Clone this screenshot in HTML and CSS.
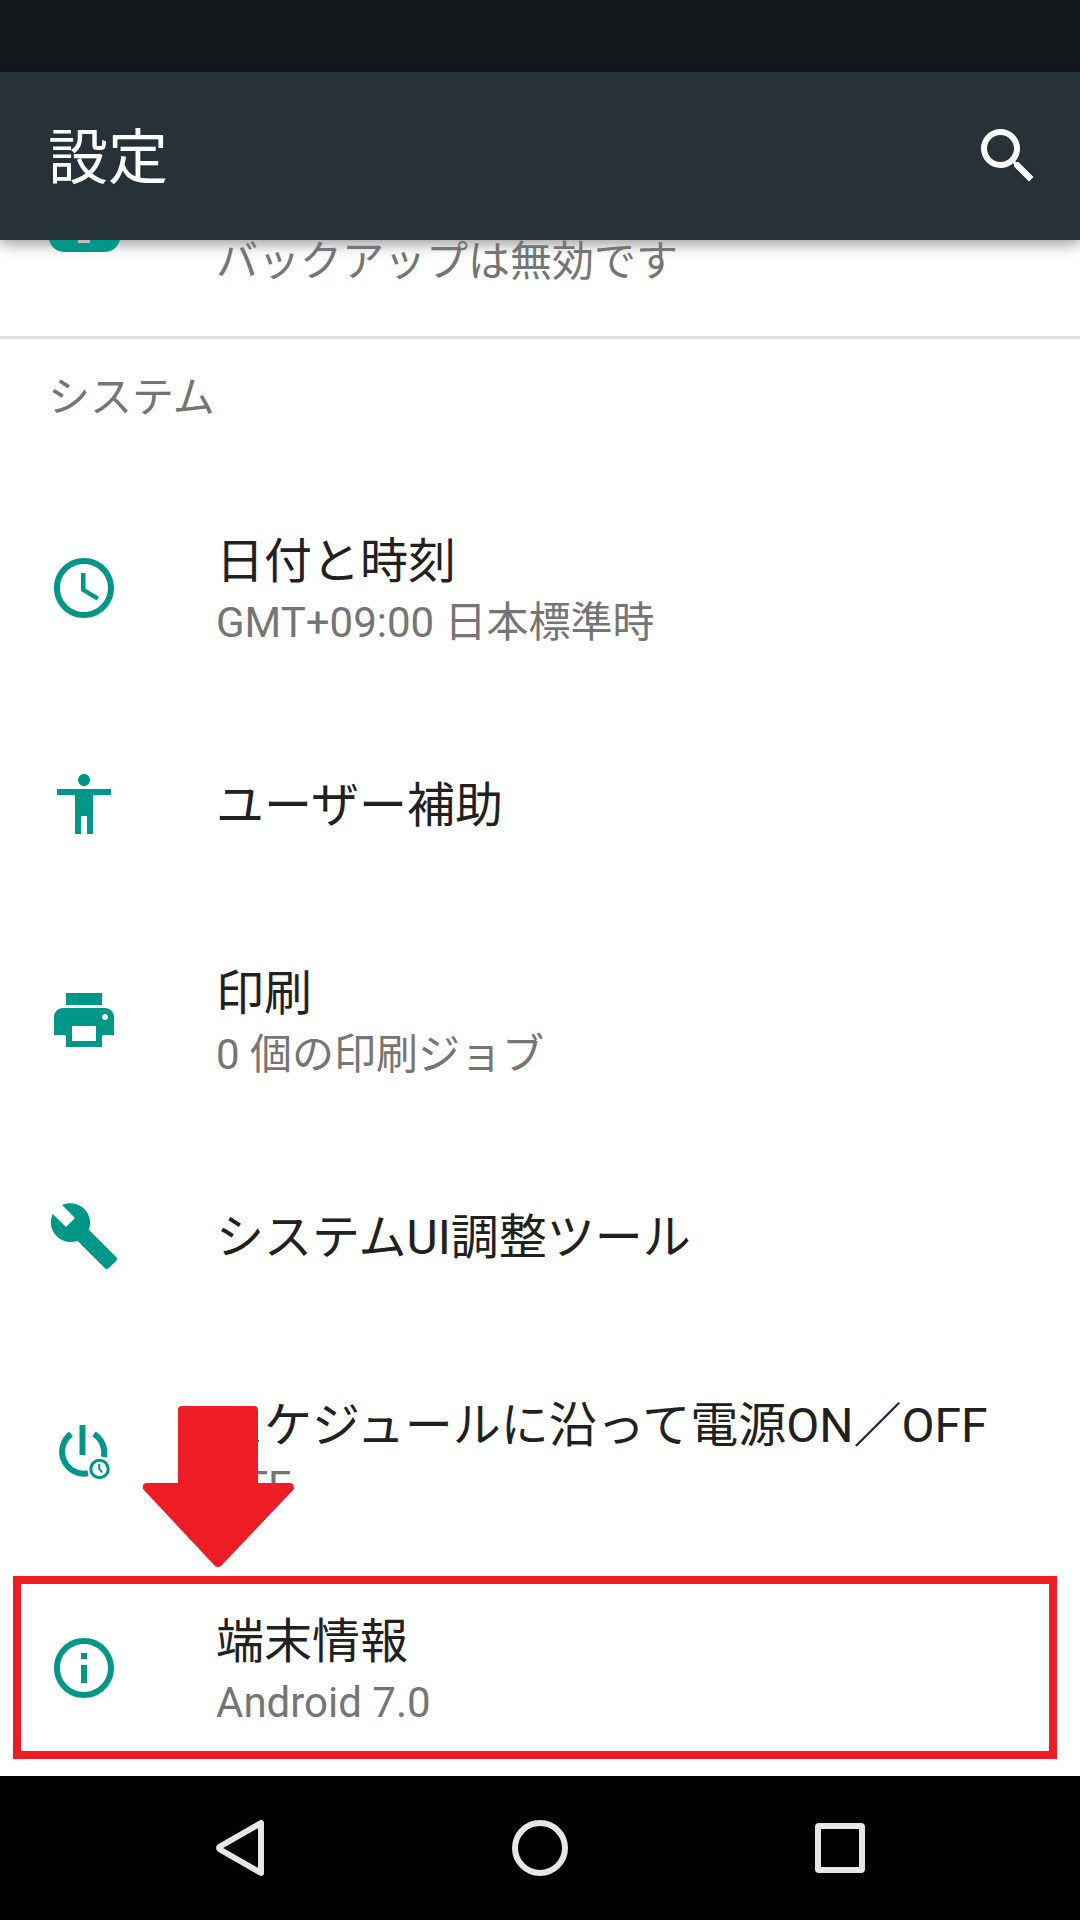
FILE: index.html
```html
<!DOCTYPE html>
<html lang="ja">
<head>
  <meta charset="utf-8">
  <meta name="viewport" content="width=device-width, initial-scale=1">
  <title>設定</title>
  <link rel="stylesheet" href="styles.css">
</head>
<body>
  <div class="status-bar"></div>

  <header class="app-bar">
    <h1 class="app-title">設定</h1>
    <button class="icon-button" type="button" aria-label="検索">
      <svg class="icon" viewBox="0 0 24 24" aria-hidden="true"><path d="M15.5 14h-.79l-.28-.27A6.471 6.471 0 0 0 16 9.5 6.5 6.5 0 1 0 9.5 16c1.61 0 3.09-.59 4.23-1.57l.27.28v.79l5 4.99L20.490 19l-4.99-5zm-6 0C7.010 14 5 11.990 5 9.500S7.010 5 9.500 5 14 7.010 14 9.500 11.990 14 9.500 14z"/></svg>
    </button>
  </header>

  <main class="content">
    <a class="row row-partial" href="#">
      <svg class="icon-partial" viewBox="0 0 72 12" aria-hidden="true"><path d="M1 0H30V3H42V0H72Q68 12 56 12H17Q5 12 1 0Z"/></svg>
      <span class="summary">バックアップは無効です</span>
    </a>

    <section class="group">
      <h2 class="group-title">システム</h2>
      <ul class="list">
        <li>
          <a class="row" href="#">
            <svg class="icon" viewBox="0 0 24 24" aria-hidden="true"><path d="M11.990 2C6.470 2 2 6.480 2 12s4.470 10 9.990 10C17.520 22 22 17.520 22 12S17.520 2 11.990 2zM12 20c-4.420 0-8-3.580-8-8s3.580-8 8-8 8 3.580 8 8-3.580 8-8 8z"/><path d="M12.500 7H11v6l5.250 3.150.75-1.230-4.500-2.670z"/></svg>
            <span class="text"><span class="title">日付と時刻</span><span class="summary">GMT+09:00 日本標準時</span></span>
          </a>
        </li>
        <li>
          <a class="row" href="#">
            <svg class="icon" viewBox="0 0 24 24" aria-hidden="true"><path d="M12 2c1.100 0 2 .9 2 2s-.9 2-2 2-2-.9-2-2 .9-2 2-2zm9 7h-6v13h-2v-6h-2v6H9V9H3V7h18v2z"/></svg>
            <span class="text"><span class="title">ユーザー補助</span></span>
          </a>
        </li>
        <li>
          <a class="row" href="#">
            <svg class="icon" viewBox="0 0 24 24" aria-hidden="true"><path d="M19 8H5c-1.660 0-3 1.340-3 3v6h4v4h12v-4h4v-6c0-1.660-1.340-3-3-3zm-3 11H8v-5h8v5zm3-7c-.55 0-1-.45-1-1s.45-1 1-1 1 .45 1 1-.45 1-1 1zm-1-9H6v4h12V3z"/></svg>
            <span class="text"><span class="title">印刷</span><span class="summary">0 個の印刷ジョブ</span></span>
          </a>
        </li>
        <li>
          <a class="row" href="#">
            <svg class="icon" viewBox="0 0 24 24" aria-hidden="true"><path d="M22.700 19l-9.100-9.100c.9-2.300.4-5-1.500-6.900-2-2-5-2.400-7.400-1.300L9 6 6 9 1.600 4.700C.4 7.100.9 10.100 2.900 12.100c1.900 1.900 4.600 2.400 6.900 1.500l9.100 9.100c.4.4 1 .4 1.400 0l2.300-2.300c.5-.4.5-1.100.1-1.400z"/></svg>
            <span class="text"><span class="title">システムUI調整ツール</span></span>
          </a>
        </li>
        <li>
          <a class="row" href="#">
            <svg class="icon icon-line" viewBox="0 0 72 72" aria-hidden="true"><path class="heavy" d="M34.500 9V39M23 18A22 22 0 0 0 40 57.300M46 18A22 22 0 0 1 55.900 41"/><circle cx="51.500" cy="53" r="8.700"/><path class="fine" d="M51.200 48V52.500L54 56.500"/></svg>
            <span class="text"><span class="title">スケジュールに沿って電源ON／OFF</span><span class="summary">OFF</span></span>
          </a>
        </li>
        <li class="highlighted">
          <a class="row" href="#">
            <svg class="icon" viewBox="0 0 24 24" aria-hidden="true"><path d="M11 17h2v-6h-2v6zm1-15C6.480 2 2 6.480 2 12s4.480 10 10 10 10-4.480 10-10S17.520 2 12 2zm0 18c-4.410 0-8-3.590-8-8s3.590-8 8-8 8 3.590 8 8-3.590 8-8 8zM11 9h2V7h-2v2z"/></svg>
            <span class="text"><span class="title">端末情報</span><span class="summary">Android 7.0</span></span>
          </a>
          <svg class="pointer" viewBox="0 0 152 162" aria-hidden="true"><path d="M40 0H112Q116 0 116 4V77H148Q152 77 152 83L79 160Q76 162 73 160L1 83Q0 77 5 77H36V4Q36 0 40 0Z"/></svg>
        </li>
      </ul>
    </section>
  </main>

  <nav class="nav-bar">
    <button class="nav-button" type="button" aria-label="戻る">
      <svg class="nav-icon" viewBox="0 0 72 72" aria-hidden="true"><path d="M57 11V61L16 37.500Q14 36 16 34.500Z"/></svg>
    </button>
    <button class="nav-button" type="button" aria-label="ホーム">
      <svg class="nav-icon" viewBox="0 0 72 72" aria-hidden="true"><circle cx="36" cy="36" r="25"/></svg>
    </button>
    <button class="nav-button" type="button" aria-label="最近">
      <svg class="nav-icon" viewBox="0 0 72 72" aria-hidden="true"><rect x="14" y="14" width="44" height="44" rx="1"/></svg>
    </button>
  </nav>
</body>
</html>
```
FILE: styles.css
```css
* {
  box-sizing: border-box;
}

body {
  display: flex;
  flex-direction: column;
  min-height: 100vh;
  margin: 0;
  background: #fff;
  color: #212121;
  font-family: Roboto, "Noto Sans CJK JP", sans-serif;
}

button {
  display: flex;
  align-items: center;
  justify-content: center;
  padding: 0;
  border: 0;
  background: none;
  color: inherit;
}

.status-bar {
  height: 72px;
  background: #13181b;
}

.app-bar {
  display: flex;
  align-items: center;
  justify-content: space-between;
  height: 168px;
  padding: 0 36px 0 48px;
  background: #263238;
  box-shadow: 0 4px 14px rgba(0, 0, 0, 0.4);
  color: #fff;
}

.app-title {
  margin: 0;
  padding-top: 6px;
  font-size: 60px;
  font-weight: 400;
  line-height: 72px;
}

.icon {
  flex: none;
  width: 72px;
  height: 72px;
  fill: currentColor;
}

.content {
  flex: 1;
}

.row {
  display: flex;
  align-items: center;
  gap: 96px;
  height: 216px;
  padding: 0 48px;
  color: #212121;
  text-decoration: none;
}

.row .icon,
.icon-partial {
  color: #009688;
}

.row-partial {
  align-items: flex-start;
  height: 96px;
}

.row-partial .summary {
  line-height: 44px;
}

.icon-partial {
  flex: none;
  width: 72px;
  height: 12px;
  fill: currentColor;
}

.group {
  border-top: 3px solid #e0e0e0;
}

.group-title {
  height: 141px;
  margin: 0;
  padding: 30px 48px 0;
  color: #757575;
  font-size: 42px;
  font-weight: 400;
  line-height: 58px;
}

.list {
  margin: 0;
  padding: 0;
  list-style: none;
}

.text {
  display: flex;
  flex-direction: column;
  padding-top: 4px;
  white-space: nowrap;
}

.title {
  font-size: 48px;
  line-height: 66px;
}

.summary {
  color: #757575;
  font-size: 42px;
  line-height: 56px;
}

.row .icon-line {
  fill: none;
  stroke: currentColor;
  stroke-width: 3;
}

.icon-line .heavy {
  stroke-width: 6;
}

.icon-line .fine {
  stroke-width: 2;
}

.highlighted {
  position: relative;
}

.highlighted::after {
  content: "";
  position: absolute;
  inset: 16px 23px 17px 13px;
  border: 8px solid #ee1c25;
  pointer-events: none;
}

.pointer {
  position: absolute;
  top: -154px;
  left: 142px;
  width: 152px;
  height: 162px;
  fill: #ee1c25;
}

.nav-bar {
  display: flex;
  height: 144px;
  padding: 0 90px;
  background: #000;
}

.nav-button {
  flex: 1;
}

.nav-icon {
  width: 72px;
  height: 72px;
  fill: none;
  stroke: #e6e6e6;
  stroke-width: 6;
  stroke-linejoin: round;
}
```
